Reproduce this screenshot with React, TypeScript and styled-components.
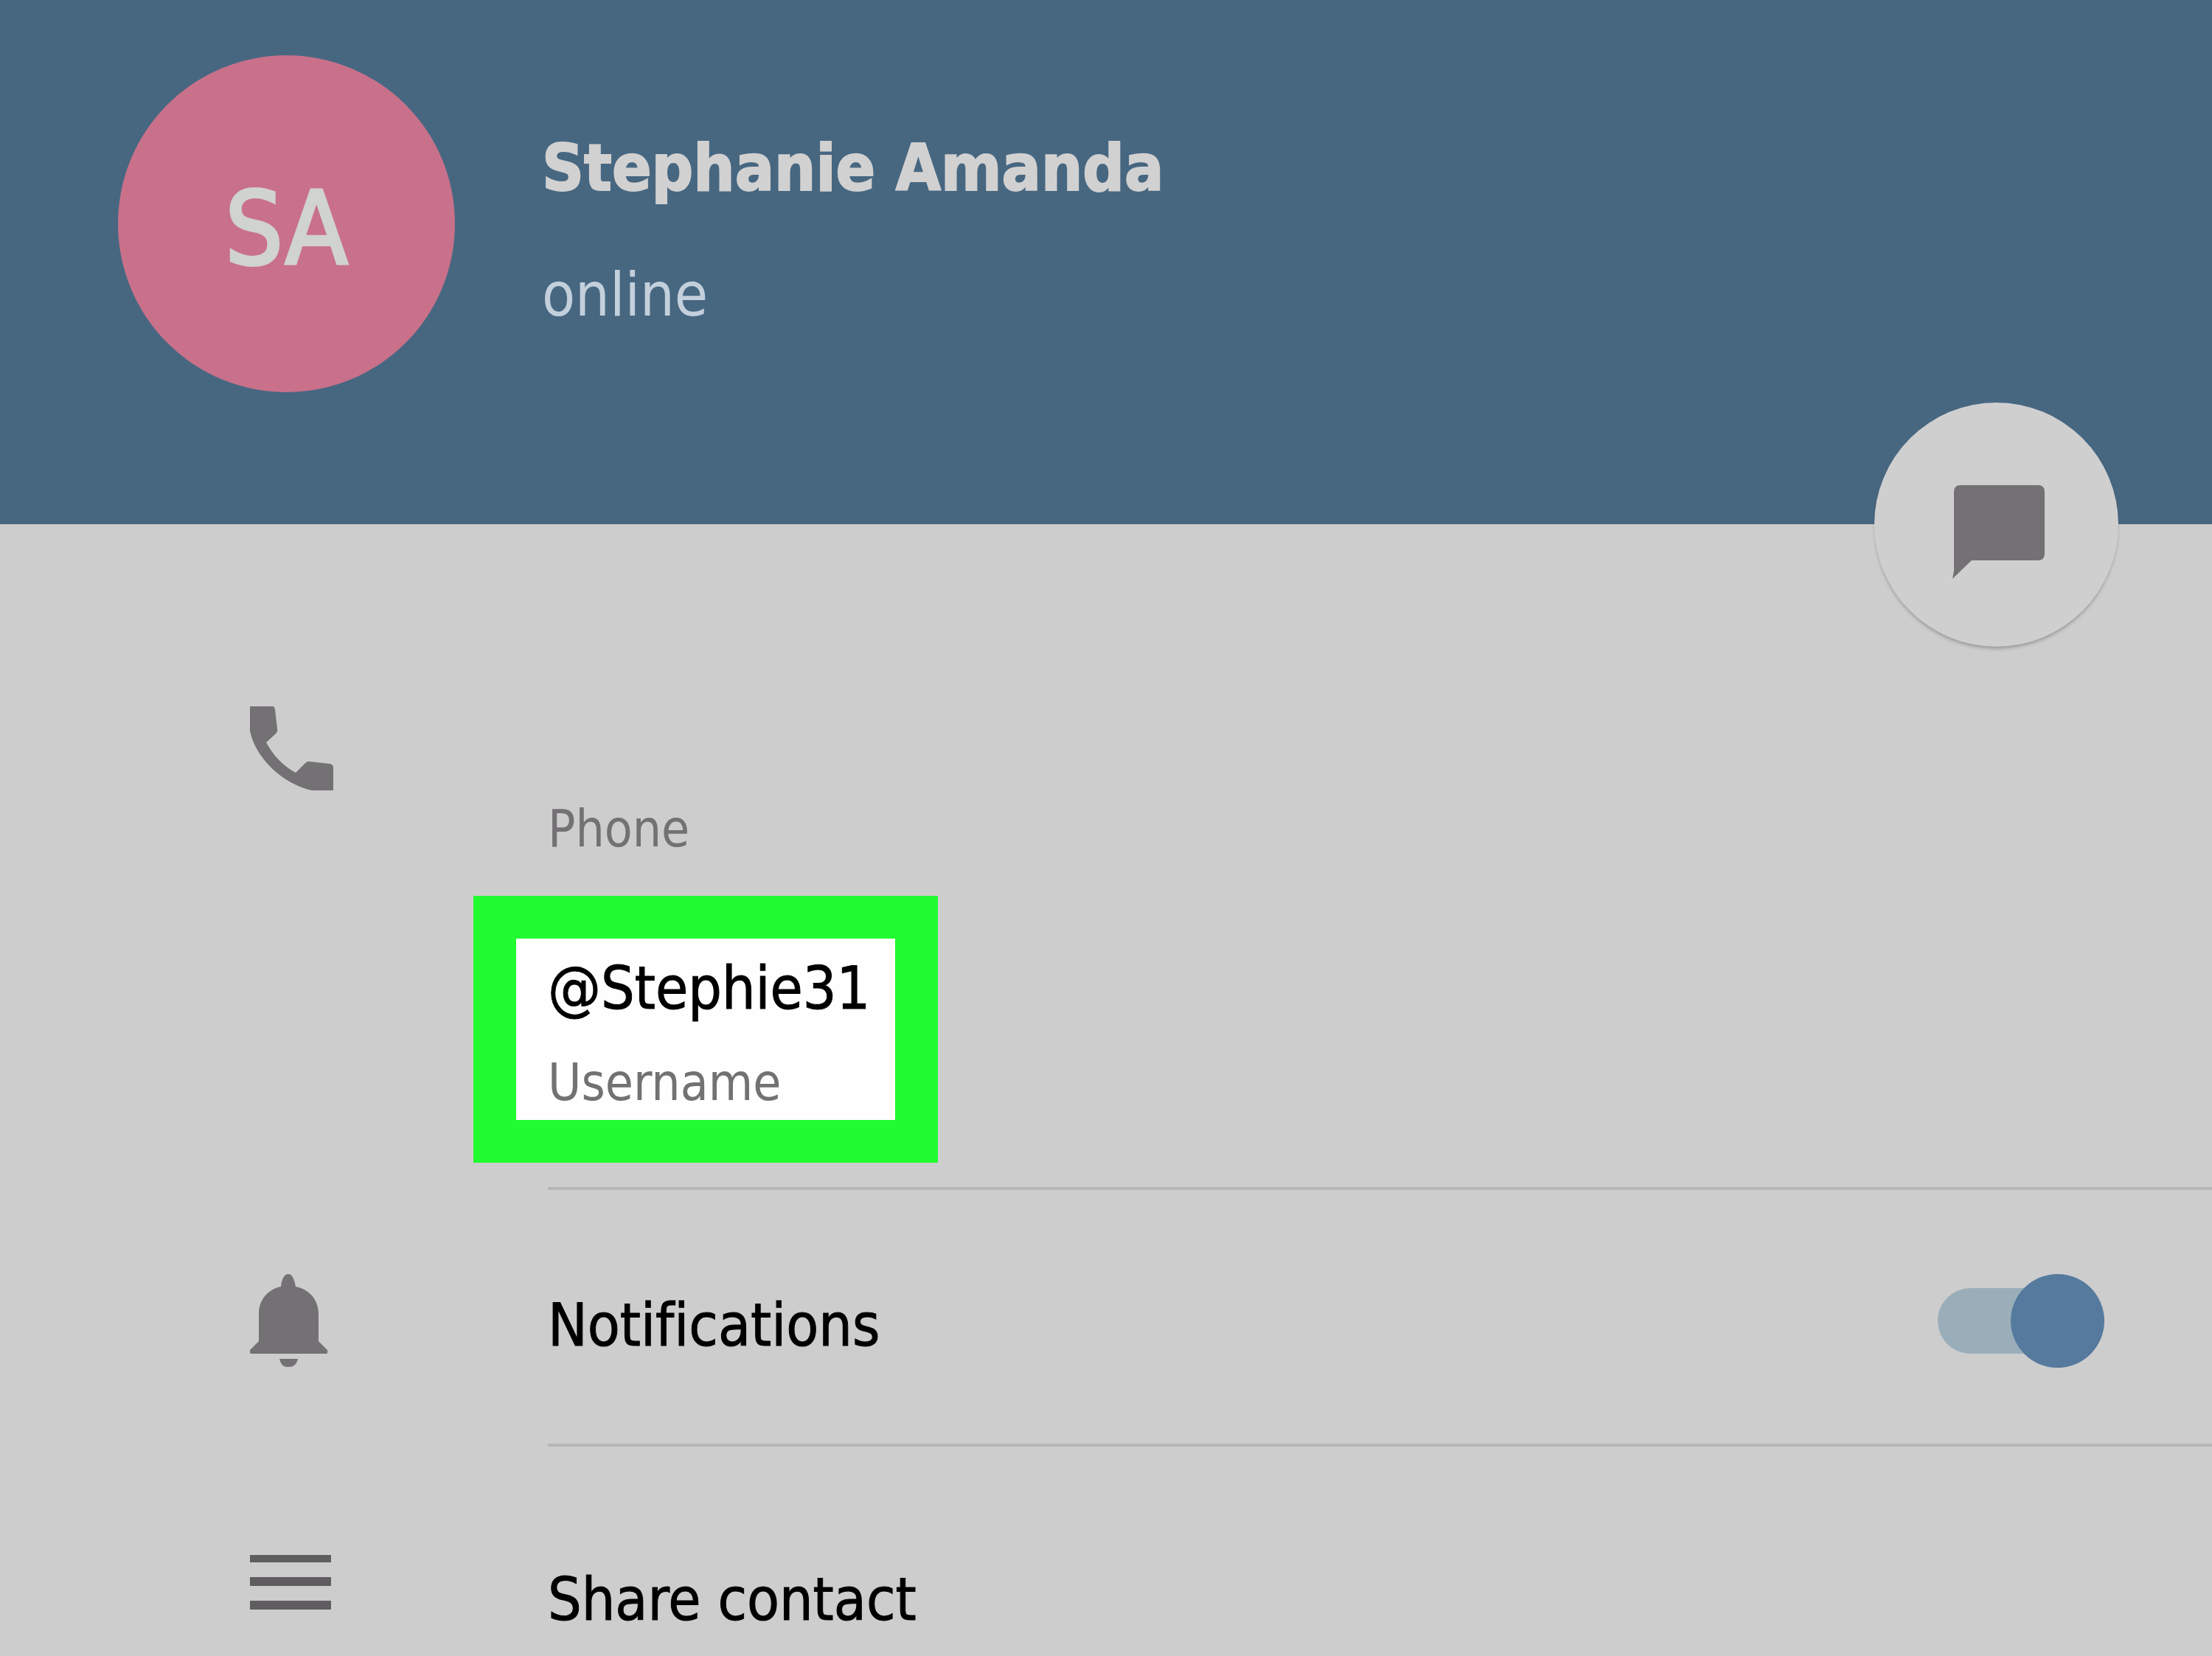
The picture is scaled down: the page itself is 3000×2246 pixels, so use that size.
import React, { useState } from 'react';
import styled, { createGlobalStyle } from 'styled-components';

const color = {
  header: '#476781',
  page: '#cecdce',
  icon: '#737173',
  line: '#b6b5b6',
  avatar: '#c9718a',
  highlight: '#20fc30',
};

const GlobalStyle = createGlobalStyle`
  *, *::before, *::after { box-sizing: border-box; }
  body {
    margin: 0;
    background: ${color.page};
    font-family: 'DejaVu Sans Condensed', 'DejaVu Sans', sans-serif;
    font-variant-ligatures: none;
  }
  h1, p, dl, dt, dd { margin: 0; font-weight: 400; }
`;

const Page = styled.main`
  min-height: 100vh;
  background: ${color.page};
`;

const Header = styled.header`
  position: relative;
  display: flex;
  align-items: flex-start;
  gap: 118px;
  min-height: 711px;
  padding: 75px 160px 0;
  background: ${color.header};
`;

const Avatar = styled.div`
  display: flex;
  flex: none;
  align-items: center;
  justify-content: center;
  width: 457px;
  height: 457px;
  padding-top: 14px;
  border-radius: 50%;
  background: ${color.avatar};
  color: #d0d3d0;
  font-size: 138px;
  line-height: 160px;
  -webkit-text-stroke: 4px #d0d3d0;
`;

const Identity = styled.div`
  display: flex;
  flex-direction: column;
  gap: 67px;
  padding-top: 98px;
`;

const Name = styled.h1`
  color: #d2d1d1;
  font-size: 88px;
  font-weight: 700;
  line-height: 110px;
  -webkit-text-stroke: 2px #d2d1d1;
`;

const Status = styled.p`
  color: #c3d0dc;
  font-size: 82px;
  line-height: 100px;
`;

const MessageButton = styled.button`
  position: absolute;
  right: 127px;
  bottom: -166px;
  display: flex;
  align-items: center;
  justify-content: center;
  width: 331px;
  height: 331px;
  padding: 20px 0 0 6px;
  border: 0;
  border-radius: 50%;
  background: #d0cfd0;
  box-shadow: 0 4px 4px -1px rgba(70, 70, 70, 0.35);
  cursor: pointer;
`;

const Row = styled.section<{ $top: number; $bottom?: number }>`
  display: grid;
  grid-template-columns: 404px minmax(0, 1fr);
  align-items: start;
  padding: ${(p) => p.$top}px 0 ${(p) => p.$bottom ?? 0}px 339px;
`;

const IconSlot = styled.span`
  display: block;
  padding-top: 11px;
`;

const Icon = styled.svg`
  display: block;
  fill: ${color.icon};
`;

const Divider = styled.hr`
  height: 4px;
  margin: 0 0 0 743px;
  border: 0;
  background: ${color.line};
`;

const Fields = styled.dl`
  display: flex;
  flex-direction: column;
  align-items: flex-start;
  gap: 46px;
`;

const Field = styled.div`
  display: flex;
  flex-direction: column-reverse;
  gap: 32px;
`;

const HighlightedField = styled(Field)`
  margin-left: -101px;
  padding: 18px 34px 6px 43px;
  border: 58px solid ${color.highlight};
  background: #fefefe;
`;

const FieldValue = styled.dd`
  min-height: 100px;
  color: #000;
  font-size: 80px;
  line-height: 100px;
  -webkit-text-stroke: 1px #000;
`;

const FieldLabel = styled.dt`
  color: ${color.icon};
  font-size: 69px;
  line-height: 90px;
`;

const Setting = styled.div`
  display: flex;
  align-items: flex-start;
  justify-content: space-between;
  padding-right: 146px;
`;

const SettingLabel = styled.label`
  padding-top: 20px;
  color: #000;
  font-size: 80px;
  line-height: 100px;
  -webkit-text-stroke: 1px #000;
`;

const ActionButton = styled.button`
  padding: 20px 0 0;
  border: 0;
  background: none;
  color: #000;
  font: inherit;
  font-size: 80px;
  line-height: 100px;
  -webkit-text-stroke: 1px #000;
  text-align: left;
  cursor: pointer;
`;

const Toggle = styled.input`
  appearance: none;
  display: grid;
  align-items: center;
  width: 226px;
  height: 127px;
  margin: 0;
  cursor: pointer;

  &::before,
  &::after {
    content: '';
    grid-area: 1 / 1;
  }
  &::before {
    height: 89px;
    border-radius: 45px;
    background: #9aaeba;
  }
  &::after {
    justify-self: start;
    width: 127px;
    height: 127px;
    border-radius: 50%;
    background: #8b8a8b;
  }
  &:checked::after {
    justify-self: end;
    background: #557a9e;
  }
`;

const ChatIcon = () => (
  <Icon width="125" height="127" viewBox="0 0 125 127" aria-hidden="true">
    <path d="M11 0H116Q125 0 125 9V93Q125 102 116 102H26L0 127L2 116V9Q2 0 11 0Z" />
  </Icon>
);

const PhoneIcon = () => (
  <Icon width="113" height="114" viewBox="0 0 113 114" aria-hidden="true">
    <path d="M0 0H31Q34 1 34 5L37 30Q38 34 35 37L22 49C31 66 45 81 62 90L75 77Q78 74 82 75L109 78Q113 79 113 83V114H84C40 104 6 66 0 33Z" />
  </Icon>
);

const BellIcon = () => (
  <Icon width="106" height="127" viewBox="0 0 106 127" aria-hidden="true">
    <path d="M42 17C43 6 47 0 52 0S60 6 62 17C81 21 93 35 93 54V91L105 103Q106 108 103 108H2Q-1 108 0 103L12 91V54C12 35 24 21 42 17Z" />
    <path d="M40 115H65C63 123 59 126 52 126S42 123 40 115Z" />
  </Icon>
);

const MenuIcon = () => (
  <Icon width="110" height="84" viewBox="0 0 110 84" aria-hidden="true">
    <path fill="#5f5d5f" d="M0 9H110V19H0ZM0 39H110V51H0ZM0 71H110V83H0Z" />
  </Icon>
);

export default function App() {
  const [notify, setNotify] = useState(true);

  return (
    <>
      <GlobalStyle />
      <Page>
        <Header>
          <Avatar>SA</Avatar>
          <Identity>
            <Name>Stephanie Amanda</Name>
            <Status>online</Status>
          </Identity>
          <MessageButton type="button" aria-label="Send message">
            <ChatIcon />
          </MessageButton>
        </Header>

        <Row $top={236} $bottom={33}>
          <IconSlot>
            <PhoneIcon />
          </IconSlot>
          <Fields>
            <Field>
              <FieldLabel>Phone</FieldLabel>
              <FieldValue />
            </Field>
            <HighlightedField>
              <FieldLabel>Username</FieldLabel>
              <FieldValue>@Stephie31</FieldValue>
            </HighlightedField>
          </Fields>
        </Row>
        <Divider />

        <Row $top={114} $bottom={103}>
          <BellIcon />
          <Setting>
            <SettingLabel htmlFor="notifications">Notifications</SettingLabel>
            <Toggle
              id="notifications"
              type="checkbox"
              checked={notify}
              onChange={(e) => setNotify(e.target.checked)}
            />
          </Setting>
        </Row>
        <Divider />

        <Row $top={138}>
          <MenuIcon />
          <ActionButton type="button">Share contact</ActionButton>
        </Row>
      </Page>
    </>
  );
}
